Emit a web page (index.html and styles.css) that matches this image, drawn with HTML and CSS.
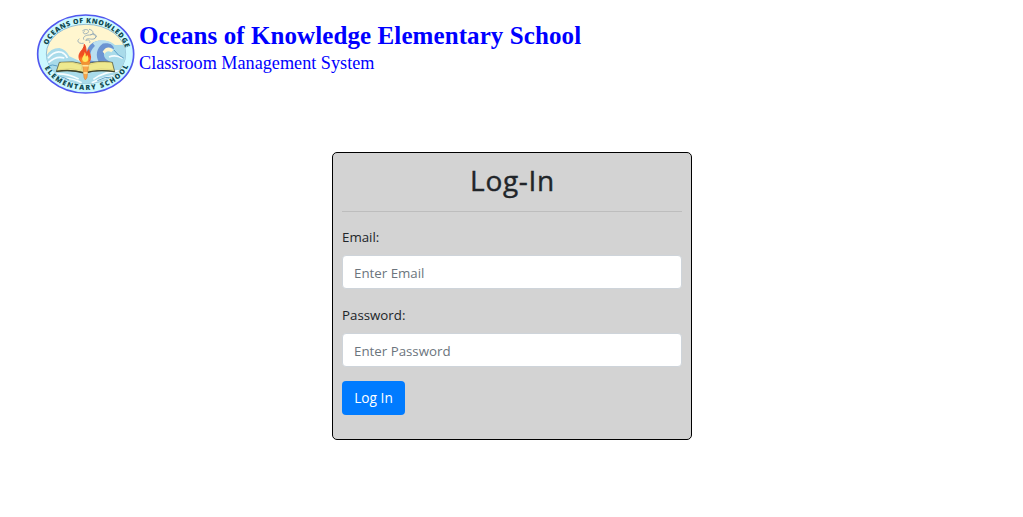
FILE: index.html
```html
<!DOCTYPE html>
<html lang="en">
<head>
<meta charset="utf-8">
<title>Log-In</title>
<link rel="stylesheet" href="styles.css">
</head>
<body>
<header class="site-header">
  <svg class="logo" viewBox="0 0 330 276" role="img" aria-label="School seal">
    <defs>
      <path id="arc-top" d="M48 138A120 93 0 0 1 288 138"/>
      <path id="arc-bottom" d="M33 138A135 108 0 0 0 303 138"/>
      <clipPath id="disc"><ellipse cx="168" cy="138" rx="119" ry="89"/></clipPath>
      <linearGradient id="flame" x1="0" y1="0" x2="0" y2="1">
        <stop offset="0" stop-color="#e6452b"/><stop offset=".6" stop-color="#f4511e"/><stop offset="1" stop-color="#ffb330"/>
      </linearGradient>
    </defs>
    <ellipse cx="167" cy="138" rx="144" ry="117" fill="#ccf8ff" stroke="#5157ef" stroke-width="5"/>
    <ellipse cx="168" cy="138" rx="119" ry="89" fill="#fff6cf" stroke="#6a9fc6" stroke-width="2"/>
    <g clip-path="url(#disc)">
      <path d="M45 152Q58 120 88 120Q108 124 118 145L160 164C178 160 174 128 190 111C207 94 238 94 255 111L290 110V235H45Z" fill="#a9dbea"/>
      <path d="M172 160C162 122 184 94 218 99C240 102 254 116 252 124C238 113 224 122 222 136C219 151 235 162 250 163L215 180H170Z" fill="#6c94d2"/>
      <path d="M179 157C178 126 195 105 218 107C200 119 195 143 207 163ZM188 105C208 91 238 96 250 112C230 102 211 105 199 119Z" fill="#b9def0"/>
      <path d="M218 131C226 116 239 114 250 126L244 133C236 127 228 129 224 138Z" fill="#fff6cf"/>
      <path d="M54 151Q74 126 95 133Q107 138 112 150M55 164Q78 142 103 150M60 200Q104 191 146 213M75 213Q120 205 155 224M190 214Q223 190 276 188M185 224Q232 203 265 202M237 147Q257 139 278 151" fill="none" stroke="#f6fdff" stroke-width="5"/>
      <path d="M53 174Q68 168 82 174M65 207Q92 202 117 216M202 218Q224 205 252 207M252 126Q265 145 281 150" fill="none" stroke="#5c9fc7" stroke-width="3"/>
    </g>
    <g fill="none" stroke="#8ba4b5" stroke-width="2.5" stroke-linecap="round">
      <path d="M158 68c14-10 24 3 13 8s-15-4-7-7M178 64c17 3 12 17 0 17s-21 7-17 13M182 80c13-4 21 7 11 12s-19-5-26 4M147 93c-9 6 0 16 13 13M190 76l10 8-7 9M169 97c8-4 13 2 10 7"/>
    </g>
    <g stroke="#3b4028" stroke-width="2">
      <path d="M88 163L79 190Q124 183 164 195Q204 183 254 191L247 163Q201 156 166 169Q130 157 88 163Z" fill="#eee98f"/>
      <path d="M79 190Q124 183 164 195Q204 183 254 191" fill="none" stroke-width="4"/>
      <path d="M93 164Q128 159 157 172L153 187Q123 178 88 185M244 164Q206 159 175 171L177 188Q212 179 249 185" fill="none" stroke="#d9cd78"/>
    </g>
    <path d="M157 161L162 209L166 216L171 209L177 161Z" fill="#f8a74b" stroke="#d07c32" stroke-width="1.5"/>
    <path d="M157 173H176M160 195H173" stroke="#ffe6a0" stroke-width="5"/>
    <path d="M163 109C162 127 146 130 147 147C148 160 157 166 166 166C177 166 184 155 181 143C179 134 177 132 177 125C172 129 171 132 171 136C166 128 170 118 163 109Z" fill="url(#flame)" stroke="#ee4823" stroke-width="3"/>
    <path d="M164 131C165 140 154 147 157 156C160 165 174 163 175 153C176 147 173 142 171 140Q170 147 167 145Q169 138 164 131Z" fill="#ffe760"/>
    <path d="M150 158Q166 168 181 158L178 170H155Z" fill="#f19334"/>
    <g class="seal-text">
      <text><textPath href="#arc-top" startOffset="27" textLength="290">OCEANS OF KNOWLEDGE</textPath></text>
      <text><textPath href="#arc-bottom" startOffset="43" textLength="302">ELEMENTARY SCHOOL</textPath></text>
    </g>
  </svg>
  <div class="brand">
    <div class="school">Oceans of Knowledge Elementary School</div>
    <div class="system">Classroom Management System</div>
  </div>
</header>
<main class="login-card">
  <h1 class="title">Log-In</h1>
  <hr class="rule">
  <form>
    <div class="group">
      <label class="label" for="email">Email:</label>
      <input class="field" id="email" type="email" placeholder="Enter Email">
    </div>
    <div class="group">
      <label class="label" for="password">Password:</label>
      <input class="field" id="password" type="password" placeholder="Enter Password">
    </div>
    <button class="submit" type="button">Log In</button>
  </form>
</main>
</body>
</html>
```
FILE: styles.css
```css
* { box-sizing: border-box; }
body {
  margin: 0;
  background: #fff;
  color: #212529;
  font: 14px/21px "Open Sans", "Noto Sans", sans-serif;
}
.site-header {
  display: flex;
  height: 152px;
  padding: 8px 0 0 30px;
}
.logo { width: 110px; height: 92px; flex: none; }
.seal-text {
  font: 900 21px "Open Sans", sans-serif;
  fill: #10494f;
}
.brand {
  margin-left: -1px;
  padding-top: 14px;
  color: #00f;
  font-family: "Liberation Serif", serif;
  white-space: nowrap;
}
.school {
  font-size: 25px;
  line-height: 28px;
  font-weight: 700;
  letter-spacing: .09px;
}
.system { font-size: 18.2px; line-height: 26px; }
.login-card {
  width: 360px;
  height: 288px;
  margin-left: 332px;
  padding: 9px;
  background: #d3d3d3;
  border: 1px solid #000;
  border-radius: 5px;
}
.title {
  margin: 1px 0 0;
  padding-left: 1px;
  font-size: 28px;
  line-height: 34px;
  font-weight: 500;
  letter-spacing: .7px;
  text-align: center;
  -webkit-text-stroke: .4px #212529;
}
.rule {
  margin: 14px 0 15px;
  border: 0;
  border-top: 1px solid rgba(0, 0, 0, .1);
}
.group { margin-bottom: 16px; }
.group:last-of-type { margin-bottom: 14px; }
.label {
  display: block;
  height: 21px;
  margin-bottom: 7px;
  font-size: 13.3px;
}
.field {
  display: block;
  width: 100%;
  height: 34px;
  padding: 6px 11px 5px;
  border: 1px solid #ced4da;
  border-radius: 4px;
  background: #fff;
  font: 13.3px/21px "Open Sans", "Noto Sans", sans-serif;
}
.field::placeholder { color: #6c757d; opacity: 1; }
.submit {
  display: block;
  width: 63px;
  height: 34px;
  padding: 0 0 1px;
  border: 0;
  border-radius: 4px;
  background: #007bff;
  color: #fff;
  font: 13.7px/21px "Open Sans", "Noto Sans", sans-serif;
}
```
